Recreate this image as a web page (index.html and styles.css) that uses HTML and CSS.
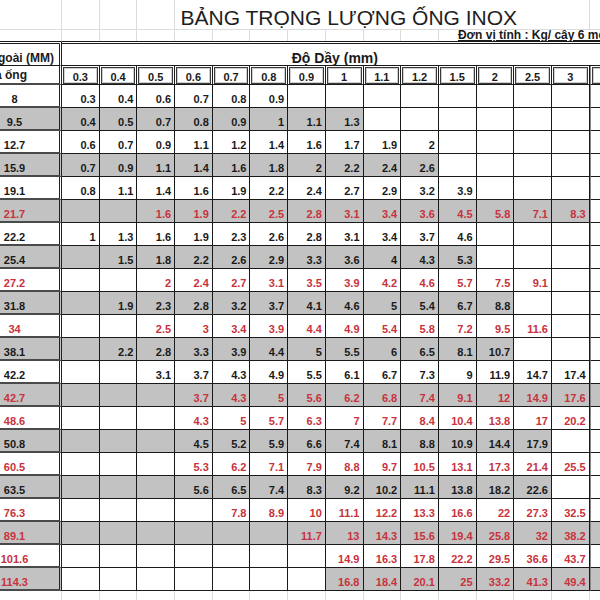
FILE: index.html
```
<!DOCTYPE html>
<html lang="vi">
<head>
<meta charset="utf-8">
<title>Bảng trọng lượng ống inox</title>
<link rel="stylesheet" href="styles.css">
</head>
<body>
<div class="sheet">
  <div class="row top">
    <div class="f"></div><div class="f"></div><div class="f"></div><div class="f"></div>
    <div class="f title">BẢNG TRỌNG LƯỢNG ỐNG INOX</div>
    <div class="f"></div>
  </div>
  <div class="row unitrow">
    <div class="f"></div><div class="f"></div><div class="f"></div><div class="f"></div><div class="f"></div><div class="f"></div><div class="f"></div><div class="f"></div><div class="f"></div><div class="f"></div><div class="f"></div>
    <div class="f unit"><span>Đơn vị tính : Kg/ cây 6 mét</span></div>
  </div>
  <div class="row h1">
    <div class="s hs1"><span>Đường kính ngoài (MM)</span></div>
    <div class="dd">Độ Dầy (mm)</div>
  </div>
  <div class="row h2">
    <div class="s hs2"><span>của ống</span></div>
    <div class="t"><span>0.3</span></div><div class="t"><span>0.4</span></div><div class="t"><span>0.5</span></div><div class="t"><span>0.6</span></div><div class="t"><span>0.7</span></div><div class="t"><span>0.8</span></div><div class="t"><span>0.9</span></div><div class="t"><span>1</span></div><div class="t"><span>1.1</span></div><div class="t"><span>1.2</span></div><div class="t"><span>1.5</span></div><div class="t"><span>2</span></div><div class="t"><span>2.5</span></div><div class="t"><span>3</span></div><div class="t x"><span></span></div>
  </div>

  <div class="row"><div class="s">8</div><div class="c">0.3</div><div class="c">0.4</div><div class="c">0.6</div><div class="c">0.7</div><div class="c">0.8</div><div class="c">0.9</div><div class="c"></div><div class="c"></div><div class="c"></div><div class="c"></div><div class="c"></div><div class="c"></div><div class="c"></div><div class="c"></div><div class="c x"></div></div>

  <div class="row gr"><div class="s">9.5</div><div class="c g">0.4</div><div class="c g">0.5</div><div class="c g">0.7</div><div class="c g">0.8</div><div class="c g">0.9</div><div class="c g">1</div><div class="c g">1.1</div><div class="c g">1.3</div><div class="c"></div><div class="c"></div><div class="c"></div><div class="c"></div><div class="c"></div><div class="c"></div><div class="c x"></div></div>

  <div class="row"><div class="s">12.7</div><div class="c">0.6</div><div class="c">0.7</div><div class="c">0.9</div><div class="c">1.1</div><div class="c">1.2</div><div class="c">1.4</div><div class="c">1.6</div><div class="c">1.7</div><div class="c">1.9</div><div class="c">2</div><div class="c"></div><div class="c"></div><div class="c"></div><div class="c"></div><div class="c x"></div></div>

  <div class="row gr"><div class="s">15.9</div><div class="c g">0.7</div><div class="c g">0.9</div><div class="c g">1.1</div><div class="c g">1.4</div><div class="c g">1.6</div><div class="c g">1.8</div><div class="c g">2</div><div class="c g">2.2</div><div class="c g">2.4</div><div class="c g">2.6</div><div class="c"></div><div class="c"></div><div class="c"></div><div class="c"></div><div class="c x"></div></div>

  <div class="row"><div class="s">19.1</div><div class="c">0.8</div><div class="c">1.1</div><div class="c">1.4</div><div class="c">1.6</div><div class="c">1.9</div><div class="c">2.2</div><div class="c">2.4</div><div class="c">2.7</div><div class="c">2.9</div><div class="c">3.2</div><div class="c">3.9</div><div class="c"></div><div class="c"></div><div class="c"></div><div class="c x"></div></div>

  <div class="row gr r"><div class="s">21.7</div><div class="c g"></div><div class="c g"></div><div class="c g">1.6</div><div class="c g">1.9</div><div class="c g">2.2</div><div class="c g">2.5</div><div class="c g">2.8</div><div class="c g">3.1</div><div class="c g">3.4</div><div class="c g">3.6</div><div class="c g">4.5</div><div class="c g">5.8</div><div class="c g">7.1</div><div class="c g">8.3</div><div class="c x"></div></div>

  <div class="row"><div class="s">22.2</div><div class="c">1</div><div class="c">1.3</div><div class="c">1.6</div><div class="c">1.9</div><div class="c">2.3</div><div class="c">2.6</div><div class="c">2.8</div><div class="c">3.1</div><div class="c">3.4</div><div class="c">3.7</div><div class="c">4.6</div><div class="c"></div><div class="c"></div><div class="c"></div><div class="c x"></div></div>

  <div class="row gr"><div class="s">25.4</div><div class="c g"></div><div class="c g">1.5</div><div class="c g">1.8</div><div class="c g">2.2</div><div class="c g">2.6</div><div class="c g">2.9</div><div class="c g">3.3</div><div class="c g">3.6</div><div class="c g">4</div><div class="c g">4.3</div><div class="c g">5.3</div><div class="c"></div><div class="c"></div><div class="c"></div><div class="c x"></div></div>

  <div class="row r"><div class="s">27.2</div><div class="c"></div><div class="c"></div><div class="c">2</div><div class="c">2.4</div><div class="c">2.7</div><div class="c">3.1</div><div class="c">3.5</div><div class="c">3.9</div><div class="c">4.2</div><div class="c">4.6</div><div class="c">5.7</div><div class="c">7.5</div><div class="c">9.1</div><div class="c"></div><div class="c x"></div></div>

  <div class="row gr"><div class="s">31.8</div><div class="c g"></div><div class="c g">1.9</div><div class="c g">2.3</div><div class="c g">2.8</div><div class="c g">3.2</div><div class="c g">3.7</div><div class="c g">4.1</div><div class="c g">4.6</div><div class="c g">5</div><div class="c g">5.4</div><div class="c g">6.7</div><div class="c g">8.8</div><div class="c"></div><div class="c"></div><div class="c x"></div></div>

  <div class="row r"><div class="s">34</div><div class="c"></div><div class="c"></div><div class="c">2.5</div><div class="c">3</div><div class="c">3.4</div><div class="c">3.9</div><div class="c">4.4</div><div class="c">4.9</div><div class="c">5.4</div><div class="c">5.8</div><div class="c">7.2</div><div class="c">9.5</div><div class="c">11.6</div><div class="c"></div><div class="c x"></div></div>

  <div class="row gr"><div class="s">38.1</div><div class="c g"></div><div class="c g">2.2</div><div class="c g">2.8</div><div class="c g">3.3</div><div class="c g">3.9</div><div class="c g">4.4</div><div class="c g">5</div><div class="c g">5.5</div><div class="c g">6</div><div class="c g">6.5</div><div class="c g">8.1</div><div class="c g">10.7</div><div class="c"></div><div class="c"></div><div class="c x"></div></div>

  <div class="row"><div class="s">42.2</div><div class="c"></div><div class="c"></div><div class="c">3.1</div><div class="c">3.7</div><div class="c">4.3</div><div class="c">4.9</div><div class="c">5.5</div><div class="c">6.1</div><div class="c">6.7</div><div class="c">7.3</div><div class="c">9</div><div class="c">11.9</div><div class="c">14.7</div><div class="c">17.4</div><div class="c x"></div></div>

  <div class="row gr r"><div class="s">42.7</div><div class="c g"></div><div class="c g"></div><div class="c g"></div><div class="c g">3.7</div><div class="c g">4.3</div><div class="c g">5</div><div class="c g">5.6</div><div class="c g">6.2</div><div class="c g">6.8</div><div class="c g">7.4</div><div class="c g">9.1</div><div class="c g">12</div><div class="c g">14.9</div><div class="c g">17.6</div><div class="c x g"></div></div>

  <div class="row r"><div class="s">48.6</div><div class="c"></div><div class="c"></div><div class="c"></div><div class="c">4.3</div><div class="c">5</div><div class="c">5.7</div><div class="c">6.3</div><div class="c">7</div><div class="c">7.7</div><div class="c">8.4</div><div class="c">10.4</div><div class="c">13.8</div><div class="c">17</div><div class="c">20.2</div><div class="c x"></div></div>

  <div class="row gr"><div class="s">50.8</div><div class="c g"></div><div class="c g"></div><div class="c g"></div><div class="c g">4.5</div><div class="c g">5.2</div><div class="c g">5.9</div><div class="c g">6.6</div><div class="c g">7.4</div><div class="c g">8.1</div><div class="c g">8.8</div><div class="c g">10.9</div><div class="c g">14.4</div><div class="c g">17.9</div><div class="c"></div><div class="c x"></div></div>

  <div class="row r"><div class="s">60.5</div><div class="c"></div><div class="c"></div><div class="c"></div><div class="c">5.3</div><div class="c">6.2</div><div class="c">7.1</div><div class="c">7.9</div><div class="c">8.8</div><div class="c">9.7</div><div class="c">10.5</div><div class="c">13.1</div><div class="c">17.3</div><div class="c">21.4</div><div class="c">25.5</div><div class="c x"></div></div>

  <div class="row gr"><div class="s">63.5</div><div class="c g"></div><div class="c g"></div><div class="c g"></div><div class="c g">5.6</div><div class="c g">6.5</div><div class="c g">7.4</div><div class="c g">8.3</div><div class="c g">9.2</div><div class="c g">10.2</div><div class="c g">11.1</div><div class="c g">13.8</div><div class="c g">18.2</div><div class="c g">22.6</div><div class="c"></div><div class="c x"></div></div>

  <div class="row r"><div class="s">76.3</div><div class="c"></div><div class="c"></div><div class="c"></div><div class="c"></div><div class="c">7.8</div><div class="c">8.9</div><div class="c">10</div><div class="c">11.1</div><div class="c">12.2</div><div class="c">13.3</div><div class="c">16.6</div><div class="c">22</div><div class="c">27.3</div><div class="c">32.5</div><div class="c x"></div></div>

  <div class="row gr r"><div class="s">89.1</div><div class="c g"></div><div class="c g"></div><div class="c g"></div><div class="c g"></div><div class="c g"></div><div class="c g"></div><div class="c g">11.7</div><div class="c g">13</div><div class="c g">14.3</div><div class="c g">15.6</div><div class="c g">19.4</div><div class="c g">25.8</div><div class="c g">32</div><div class="c g">38.2</div><div class="c x g"></div></div>

  <div class="row r"><div class="s">101.6</div><div class="c"></div><div class="c"></div><div class="c"></div><div class="c"></div><div class="c"></div><div class="c"></div><div class="c"></div><div class="c">14.9</div><div class="c">16.3</div><div class="c">17.8</div><div class="c">22.2</div><div class="c">29.5</div><div class="c">36.6</div><div class="c">43.7</div><div class="c x"></div></div>

  <div class="row gr r"><div class="s">114.3</div><div class="c"></div><div class="c"></div><div class="c"></div><div class="c"></div><div class="c"></div><div class="c"></div><div class="c"></div><div class="c g">16.8</div><div class="c g">18.4</div><div class="c g">20.1</div><div class="c g">25</div><div class="c g">33.2</div><div class="c g">41.3</div><div class="c g">49.4</div><div class="c x g"></div></div>

  <div class="row foot">
    <div class="f"></div><div class="f"></div><div class="f"></div><div class="f"></div><div class="f"></div><div class="f"></div><div class="f"></div><div class="f"></div><div class="f"></div><div class="f"></div><div class="f"></div><div class="f"></div><div class="f"></div><div class="f"></div><div class="f"></div><div class="f"></div>
  </div>
</div>
</body>
</html>
```
FILE: styles.css
```
html, body {
  margin: 0;
  padding: 0;
  background: #ffffff;
  overflow: hidden;
}

body {
  font-family: "Liberation Sans", Arial, sans-serif;
  color: #1a1a1a;
}

.sheet {
  display: grid;
  grid-template-columns: 92px repeat(14, 37.7px) 40px;
  grid-template-rows: 30px 11px 25px 19px repeat(22, 23px) 12px;
  width: 660px;
  margin-left: -30px;
}

.row { display: contents; }

.sheet .row > div {
  box-sizing: border-box;
  overflow: hidden;
  white-space: nowrap;
  min-width: 0;
}

/* data cells */
.c, .s {
  display: flex;
  align-items: flex-end;
  justify-content: flex-end;
  padding: 0 3px 1px 0;
  font-size: 11px;
  font-weight: bold;
  line-height: 13px;
  border-right: 1px solid #1a1a1a;
  border-bottom: 1px solid #1a1a1a;
}

.g { background: #c2c2c2; }

.sheet .x {
  border-left: 1px solid #8a8a8a;
}

/* size column */
.s {
  justify-content: center;
  padding: 0;
  border-bottom: 2px solid #4a4a4a;
  border-right: 3px double #222222;
}

.gr .s { background: #c2c2c2; }

.r .c, .r .s { color: #c8323c; }

/* faint spreadsheet gridlines */
.f {
  border-right: 1px solid #dcdcdc;
  border-bottom: 1px solid #dcdcdc;
}

.title {
  grid-column: span 11;
  display: flex;
  align-items: flex-end;
  justify-content: center;
  padding-right: 66px;
  font-size: 21px;
  line-height: 22px;
  color: #1e1e1e;
}

.unitrow .f { border-bottom: none; }

.unit {
  grid-column: span 5;
  padding-left: 19px;
  font-size: 12px;
  font-weight: bold;
  line-height: 11px;
  border-right: none;
}

.sheet .row > .unit { overflow: visible; }

.unit span { text-decoration: underline; }

/* header row 1 */
.h1 > div {
  border-top: 3px double #1a1a1a;
  border-bottom: 1px solid #1a1a1a;
}

.dd {
  grid-column: span 15;
  display: flex;
  align-items: flex-end;
  justify-content: center;
  padding: 0 22px 0 0;
  font-size: 14px;
  font-weight: bold;
  line-height: 13px;
}

.sheet .hs1,
.sheet .hs2 {
  justify-content: flex-end;
  font-size: 12px;
  line-height: 14px;
}

.sheet .h1 > .hs1 {
  border-bottom: 1px solid #1a1a1a;
  padding: 0 5px 0 0;
}

.sheet .hs2 {
  padding: 0 32px 1px 0;
}

/* header row 2: thickness labels */
.t {
  padding: 1px 1px 0 1px;
  border-right: 1px solid #1a1a1a;
  border-bottom: 1px solid #1a1a1a;
}

.t span {
  display: block;
  box-sizing: border-box;
  height: 100%;
  padding-top: 3px;
  border: 1px solid #3a3a3a;
  box-shadow: inset 0 0 0 1px #cfcfcf;
  font-size: 11px;
  font-weight: bold;
  line-height: 13px;
  text-align: center;
}

.foot .f { border-bottom: none; }
```
